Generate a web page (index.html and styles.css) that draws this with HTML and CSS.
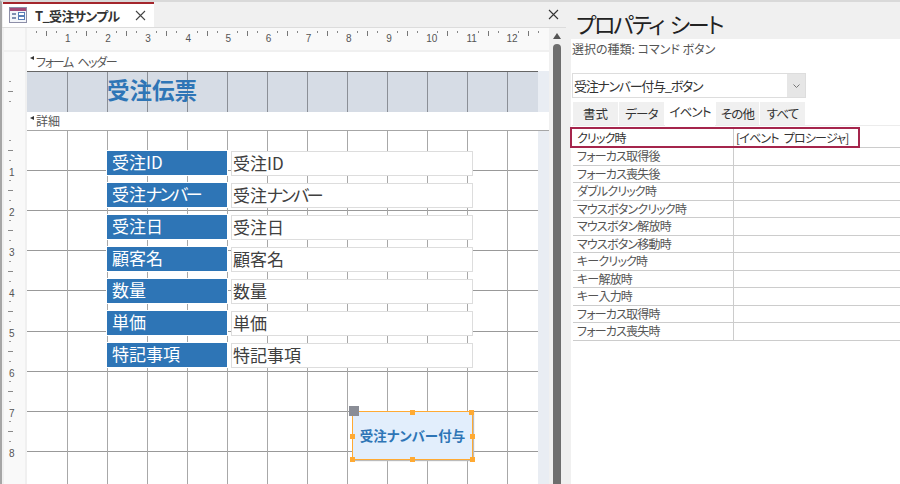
FILE: index.html
```html
<!DOCTYPE html>
<html>
<head>
    <meta charset='utf-8'>
    <title>T_受注サンプル</title>
    <link rel="stylesheet" href="styles.css">
</head>
<body>
    <div class="div-design">
        <div class="div-tabbar">
            <div class="div-tab">
                <svg class="svg-form" width="18" height="18" viewBox="0 0 18 18">
                    <rect x="0.5" y="1.5" width="17" height="15" fill="#f4f6fa" stroke="#8d8fa8"/>
                    <rect x="1" y="2" width="16" height="3" fill="#a24a78"/>
                    <path d="M3 8h4M3 12h4" stroke="#5a6f9a" stroke-width="1.4"/>
                    <rect x="9.5" y="6.5" width="6" height="3" fill="#fff" stroke="#5a7fb8"/>
                    <rect x="9.5" y="10.5" width="6" height="3" fill="#fff" stroke="#5a7fb8"/>
                </svg>
                <span class="span-tabname">T_受注サンプル</span>
                <svg class="svg-close" width="11" height="11" viewBox="0 0 11 11"><path d="M1 1l9 9M10 1l-9 9" stroke="#444" stroke-width="1.1"/></svg>
            </div>
            <svg class="svg-close svg-close-right" width="11" height="11" viewBox="0 0 11 11"><path d="M1 1l9 9M10 1l-9 9" stroke="#333" stroke-width="1.1"/></svg>
        </div>

        <div class="div-body">
            <div class="div-form">
                <div class="div-row row-ruler">
                    <div class="div-side"></div>
                    <div class="div-main div-hruler">
                        <span>1</span><span>2</span><span>3</span><span>4</span><span>5</span><span>6</span>
                        <span>7</span><span>8</span><span>9</span><span>10</span><span>11</span><span>12</span><span></span>
                    </div>
                </div>
                <div class="div-row row-section">
                    <div class="div-side"></div>
                    <div class="div-main div-section section-kana"><i></i>フォーム ヘッダー</div>
                </div>
                <div class="div-row row-band">
                    <div class="div-side div-vticks"></div>
                    <div class="div-main div-band">
                        <div class="div-surface surface-band">受注伝票</div>
                    </div>
                </div>
                <div class="div-row row-section row-detail">
                    <div class="div-side"></div>
                    <div class="div-main div-section"><i></i>詳細</div>
                </div>
                <div class="div-row row-grid">
                    <div class="div-side div-vruler">
                        <span>1</span><span>2</span><span>3</span><span>4</span>
                        <span>5</span><span>6</span><span>7</span><span>8</span>
                    </div>
                    <div class="div-main div-back">
                        <div class="div-surface surface-grid">
                            <div class="div-field"><label>受注ID</label><div class="div-input">受注ID</div></div>
                            <div class="div-field"><label>受注<span class="kana">ナンバー</span></label><div class="div-input">受注<span class="kana">ナンバー</span></div></div>
                            <div class="div-field"><label>受注日</label><div class="div-input">受注日</div></div>
                            <div class="div-field"><label>顧客名</label><div class="div-input">顧客名</div></div>
                            <div class="div-field"><label>数量</label><div class="div-input">数量</div></div>
                            <div class="div-field"><label>単価</label><div class="div-input">単価</div></div>
                            <div class="div-field"><label>特記事項</label><div class="div-input">特記事項</div></div>
                            <div class="div-button">
                                受注ナンバー付与
                                <b class="grip grip-move"></b>
                                <b class="grip grip-tc"></b><b class="grip grip-tr"></b>
                                <b class="grip grip-ml"></b><b class="grip grip-mr"></b>
                                <b class="grip grip-bl"></b><b class="grip grip-bc"></b><b class="grip grip-br"></b>
                            </div>
                        </div>
                    </div>
                </div>
            </div>
            <div class="div-scroll">
                <svg width="8" height="6" viewBox="0 0 8 6"><path d="M4 0l4 6H0z" fill="#555"/></svg>
                <div class="div-thumb"></div>
            </div>
        </div>
    </div>

    <div class="div-props">
        <h1>プロパティ シート</h1>
        <div class="div-content">
            <div class="div-kind">選択の種類: コマンド ボタン</div>
            <div class="div-combo">
                <span>受注ナンバー付与_ボタン</span>
                <div class="div-arrow"><svg width="7" height="4" viewBox="0 0 7 4"><path d="M0.5 0.5l3 3 3-3" fill="none" stroke="#777"/></svg></div>
            </div>
            <div class="div-tabs">
                <span>書式</span><span>データ</span><span class="tab-on">イベント</span><span>その他</span><span>すべて</span>
            </div>
            <div class="div-table">
                <div class="div-prop prop-first"><span>クリック時</span><span>[イベント プロシージャ]</span></div>
                <div class="div-prop"><span>フォーカス取得後</span><span></span></div>
                <div class="div-prop"><span>フォーカス喪失後</span><span></span></div>
                <div class="div-prop"><span>ダブルクリック時</span><span></span></div>
                <div class="div-prop"><span>マウスボタンクリック時</span><span></span></div>
                <div class="div-prop"><span>マウスボタン解放時</span><span></span></div>
                <div class="div-prop"><span>マウスボタン移動時</span><span></span></div>
                <div class="div-prop"><span>キークリック時</span><span></span></div>
                <div class="div-prop"><span>キー解放時</span><span></span></div>
                <div class="div-prop"><span>キー入力時</span><span></span></div>
                <div class="div-prop"><span>フォーカス取得時</span><span></span></div>
                <div class="div-prop"><span>フォーカス喪失時</span><span></span></div>
                <div class="div-mark"></div>
            </div>
        </div>
    </div>
</body>
</html>
```

FILE: styles.css
```css
/* reset */
body {
    margin: 0;
    padding: 0;
    width: 900px;
    height: 484px;
    overflow: hidden;
    display: flex;
    background-color: white;
    color: #333;
    font-family: "Noto Sans CJK JP", "Noto Sans", sans-serif;
    font-feature-settings: "palt" 1;
}

.kana {
    letter-spacing: -2.5px;
}

/* left pane */
.div-design {
    width: 566px;
    height: 484px;
    box-sizing: border-box;
    border-top: 2px solid #d9d9d9;
    border-left: 2px solid #a6a6a6;
    display: flex;
    flex-direction: column;
    background-color: #f0f0f0;
}

.div-tabbar {
    height: 25px;
    flex-shrink: 0;
    display: flex;
    justify-content: space-between;
    align-items: center;
    border-bottom: 1px solid #dcdcdc;
}

.div-tab {
    width: 151px;
    height: 25px;
    margin-left: 1px;
    box-sizing: border-box;
    border-top: 2px solid #a4262c;
    background-color: white;
    display: flex;
    align-items: center;
    padding-left: 6px;
    padding-bottom: 1px;
}

.svg-form {
    flex-shrink: 0;
}

.span-tabname {
    font-size: 13px;
    font-weight: bold;
    margin-left: 8px;
    width: 90px;
    letter-spacing: -0.7px;
    white-space: nowrap;
}

.svg-close {
    margin-left: 10px;
    flex-shrink: 0;
}

.svg-close-right {
    margin: 0 7px 0 0;
}

.div-body {
    flex-grow: 1;
    display: flex;
    min-height: 0;
}

.div-form {
    width: 547px;
    display: flex;
    flex-direction: column;
}

.div-row {
    display: flex;
}

.div-side {
    width: 21px;
    margin: 0 2px;
    background-color: #f9f9f9;
    flex-shrink: 0;
}

.div-main {
    flex-grow: 1;
    min-width: 0;
}

/* rulers */
.row-ruler {
    height: 22px;
    margin-bottom: 2px;
}

.div-hruler {
    background-color: #f9f9f9;
    display: flex;
    overflow: hidden;
    font-family: "Liberation Sans", sans-serif;
    font-size: 10px;
    color: #555;
}

.div-hruler span {
    width: 40.15px;
    flex-shrink: 0;
    box-sizing: border-box;
    padding-top: 5px;
    padding-left: 38px;
    background-image:
        linear-gradient(#888, #888),
        linear-gradient(#777, #777),
        linear-gradient(#888, #888);
    background-repeat: no-repeat;
    background-size: 1px 2px, 1px 5px, 1px 2px;
    background-position: 9px 3px, 19px 3px, 29px 3px;
}

.div-vticks {
    background-image:
        linear-gradient(#999, #999),
        linear-gradient(#888, #888),
        linear-gradient(#999, #999);
    background-repeat: no-repeat;
    background-size: 2px 1px, 5px 1px, 2px 1px;
    background-position: 5px 10px, 4px 20px, 5px 30px;
}

.div-vruler {
    display: flex;
    flex-direction: column;
    font-family: "Liberation Sans", sans-serif;
    font-size: 10px;
    line-height: 10px;
    color: #555;
    padding-top: 7px;
    box-sizing: border-box;
    min-height: 0;
    overflow: hidden;
}

.div-vruler span {
    height: 40.2px;
    flex-shrink: 0;
    box-sizing: border-box;
    padding-top: 30px;
    padding-left: 5px;
    background-image:
        linear-gradient(#999, #999),
        linear-gradient(#888, #888),
        linear-gradient(#999, #999);
    background-repeat: no-repeat;
    background-size: 2px 1px, 5px 1px, 2px 1px;
    background-position: 5px 2px, 4px 12px, 5px 22px;
}

/* section bars */
.row-section {
    height: 19px;
}

.row-detail {
    height: 19px;
}

.row-detail .div-main {
    border-bottom: 1px solid #a6a6a6;
    line-height: 18px;
}

.div-section {
    background-color: white;
    font-size: 12px;
    color: #555;
    padding-left: 9px;
    line-height: 20px;
    position: relative;
}

.section-kana {
    letter-spacing: -1.3px;
    word-spacing: 3px;
}

.div-section i {
    position: absolute;
    left: 3px;
    top: 4px;
    width: 0;
    height: 0;
    border-top: 2px solid transparent;
    border-bottom: 2px solid transparent;
    border-right: 4px solid #333;
}

/* design surface */
.row-band {
    height: 41px;
}

.div-band,
.div-back {
    background-color: #e9edf3;
}

.div-surface {
    width: 511px;
}

.surface-band {
    height: 41px;
    box-sizing: border-box;
    background-color: #d6dce5;
    background-image:
        repeating-linear-gradient(90deg, transparent 0 39px, #8b8f96 39px 40px),
        repeating-linear-gradient(90deg, transparent 0 39px, #8b8f96 39px 40px);
    background-repeat: no-repeat;
    background-size: 200px 100%, 310px 100%;
    background-position: 1px 0, 201px 0;
    border-top: 1px solid #666;
    padding-left: 80px;
    font-size: 22.5px;
    font-weight: bold;
    color: #2e75b6;
    line-height: 35px;
}

.row-grid {
    flex-grow: 1;
    min-height: 0;
}

.surface-grid {
    height: 100%;
    box-sizing: border-box;
    padding: 20px 0 0 80px;
    background-color: white;
    background-image:
        repeating-linear-gradient(90deg, transparent 0 39px, #a8a8a8 39px 40px),
        repeating-linear-gradient(90deg, transparent 0 39px, #a8a8a8 39px 40px),
        repeating-linear-gradient(180deg, transparent 0 39px, #999 39px 40px),
        repeating-linear-gradient(180deg, transparent 0 39px, #999 39px 40px);
    background-repeat: no-repeat;
    background-size: 200px 100%, 310px 100%, 100% 160px, 100% 200px;
    background-position: 1px 0, 201px 0, 0 0, 0 161px;
    display: flex;
    flex-direction: column;
    gap: 8px;
}

.div-field {
    display: flex;
    height: 24px;
    align-items: center;
    gap: 4px;
}

.div-field label {
    width: 120px;
    height: 24px;
    padding-left: 5px;
    box-sizing: border-box;
    background-color: #2e75b6;
    box-shadow: 0 0 0 1px white;
    color: white;
    font-size: 17px;
    line-height: 22px;
}

.div-input {
    width: 242px;
    height: 25px;
    padding-left: 1px;
    box-sizing: border-box;
    background-color: white;
    border: 1px solid #ddd;
    font-size: 17px;
    line-height: 21px;
    color: #404040;
}

.div-button {
    position: relative;
    width: 121px;
    height: 49px;
    margin: 36px 0 0 245px;
    box-sizing: border-box;
    border: 1px solid #ffaa33;
    background-color: #e2eefc;
    box-shadow: 1px 1px 1px #bbb;
    color: #2e75b6;
    font-size: 13.5px;
    font-weight: bold;
    text-align: center;
    line-height: 47px;
    flex-shrink: 0;
}

.grip {
    position: absolute;
    width: 5px;
    height: 5px;
    background-color: #ffaa33;
}

.grip-move {
    left: -4px;
    top: -6px;
    width: 10px;
    height: 10px;
    background-color: #8a8d96;
}

.grip-tc { left: 57px; top: -2px; }
.grip-tr { right: -2px; top: -2px; }
.grip-ml { left: -3px; top: 22px; }
.grip-mr { right: -3px; top: 22px; }
.grip-bl { left: -3px; bottom: -3px; }
.grip-bc { left: 57px; bottom: -3px; }
.grip-br { right: -3px; bottom: -3px; }

/* scrollbar */
.div-scroll {
    width: 15px;
    padding-left: 4px;
    padding-right: 3px;
    padding-top: 5px;
    box-sizing: border-box;
    display: flex;
    flex-direction: column;
    align-items: center;
}

.div-thumb {
    margin-top: 5px;
    width: 8px;
    flex-grow: 1;
    background-color: #6e6e6e;
    border-radius: 4px 4px 0 0;
}

/* property sheet */
.div-props {
    width: 334px;
    height: 484px;
    box-sizing: border-box;
    border-top: 2px solid #d9d9d9;
    background-color: #f0f0f0;
    display: flex;
    flex-direction: column;
}

.div-props h1 {
    margin: 0;
    height: 37px;
    padding-left: 10px;
    font-size: 22px;
    font-weight: normal;
    color: #222;
    line-height: 42px;
    letter-spacing: -2.2px;
    word-spacing: 4px;
    white-space: nowrap;
}

.div-content {
    flex-grow: 1;
    margin-left: 5px;
    background-color: white;
    padding-left: 1px;
}

.div-kind {
    height: 34px;
    font-size: 12px;
    color: #555;
    line-height: 20px;
}

.div-combo {
    width: 234px;
    height: 25px;
    box-sizing: border-box;
    border: 1px solid #ddd;
    display: flex;
    justify-content: space-between;
    font-size: 13px;
    line-height: 23px;
    letter-spacing: -1.3px;
    padding-left: 1px;
}

.div-arrow {
    width: 18px;
    background-color: #e6e6e6;
    display: flex;
    align-items: center;
    justify-content: center;
}

.div-tabs {
    display: flex;
    height: 23px;
    margin-top: 4px;
    padding-left: 1px;
    align-items: stretch;
    border-bottom: 1px solid #ececec;
}

.div-tabs span {
    background-color: #f0f0f0;
    margin-right: 1px;
    font-size: 12.5px;
    color: #333;
    text-align: center;
    line-height: 24px;
    letter-spacing: -0.8px;
    width: 45px;
}

.div-tabs span:nth-child(1) { letter-spacing: 0; }
.div-tabs span:nth-child(3) { width: 50px; }
.div-tabs span:nth-child(4) { width: 43px; }

.div-tabs .tab-on {
    background-color: white;
    margin-top: -1px;
    height: 25px;
    line-height: 22px;
}

.div-table {
    position: relative;
    margin-top: 1px;
    margin-left: 1px;
}

.div-prop {
    display: flex;
    height: 17.5px;
    box-sizing: border-box;
    border-bottom: 1px solid #ccc;
    font-size: 12px;
    color: #555;
    line-height: 16px;
    letter-spacing: -0.8px;
}

.prop-first {
    height: 21px;
    line-height: 22px;
    color: #333;
    word-spacing: 3px;
}

.div-prop span {
    white-space: nowrap;
}

.div-prop span:first-child {
    width: 161px;
    padding-left: 4px;
    box-sizing: border-box;
    border-right: 1px solid #ccc;
}

.div-prop span:last-child {
    padding-left: 2px;
}

.div-mark {
    position: absolute;
    left: -3px;
    top: 0;
    width: 290px;
    height: 21px;
    box-sizing: border-box;
    border: 2px solid #a5254c;
}
```
